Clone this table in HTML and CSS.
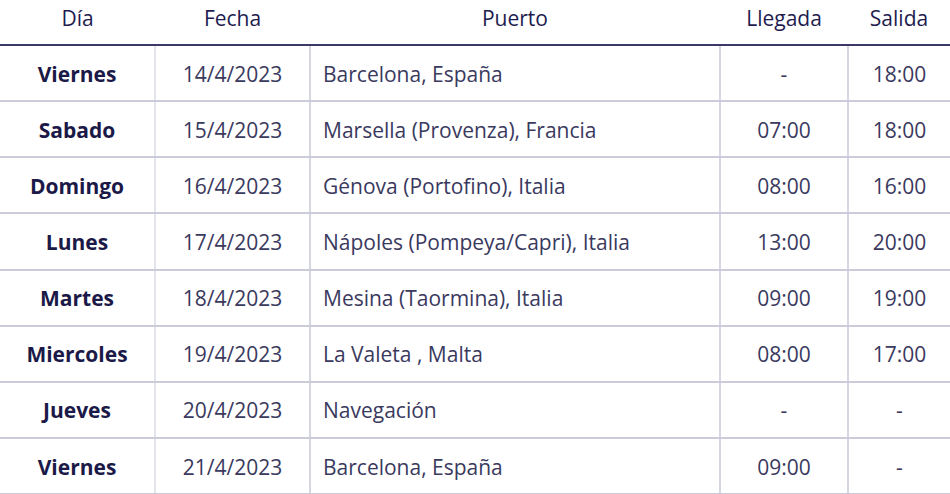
FILE: index.html
```html
<!DOCTYPE html>
<html lang="es">
<head>
<meta charset="utf-8">
<link rel="stylesheet" href="styles.css">
</head>
<body>
<table class="itinerary">
  <colgroup>
    <col class="c-dia"><col class="c-fecha"><col class="c-puerto"><col class="c-llegada"><col class="c-salida">
  </colgroup>
  <thead>
    <tr><th>Día</th><th>Fecha</th><th>Puerto</th><th>Llegada</th><th>Salida</th></tr>
  </thead>
  <tbody>
    <tr><td class="day">Viernes</td><td>14/4/2023</td><td class="port">Barcelona, España</td><td>-</td><td>18:00</td></tr>
    <tr><td class="day">Sabado</td><td>15/4/2023</td><td class="port">Marsella (Provenza), Francia</td><td>07:00</td><td>18:00</td></tr>
    <tr><td class="day">Domingo</td><td>16/4/2023</td><td class="port">Génova (Portofino), Italia</td><td>08:00</td><td>16:00</td></tr>
    <tr><td class="day">Lunes</td><td>17/4/2023</td><td class="port">Nápoles (Pompeya/Capri), Italia</td><td>13:00</td><td>20:00</td></tr>
    <tr><td class="day">Martes</td><td>18/4/2023</td><td class="port">Mesina (Taormina), Italia</td><td>09:00</td><td>19:00</td></tr>
    <tr><td class="day">Miercoles</td><td>19/4/2023</td><td class="port">La Valeta , Malta</td><td>08:00</td><td>17:00</td></tr>
    <tr><td class="day">Jueves</td><td>20/4/2023</td><td class="port">Navegación</td><td>-</td><td>-</td></tr>
    <tr><td class="day">Viernes</td><td>21/4/2023</td><td class="port">Barcelona, España</td><td>09:00</td><td>-</td></tr>
  </tbody>
</table>
</body>
</html>
```

FILE: styles.css
```css
html, body {
  margin: 0;
  padding: 0;
  background: #ffffff;
}
body {
  font-family: "Open Sans", "Noto Sans", sans-serif;
  color: #3a395e;
  overflow: hidden;
}
.itinerary {
  width: 950px;
  border-collapse: collapse;
  table-layout: fixed;
  font-size: 21px;
}
.c-dia { width: 155px; }
.c-fecha { width: 155px; }
.c-puerto { width: 410px; }
.c-llegada { width: 128px; }
.c-salida { width: 102px; }

.itinerary th {
  height: 36px;
  padding: 0 0 8px;
  font-weight: 500;
  color: #1e1c4f;
  text-align: center;
  border-bottom: 2px solid #3a3966;
}
.itinerary td {
  height: 53.15px;
  padding: 1px 0 0;
  text-align: center;
  border-bottom: 2px solid #cbcbda;
  border-left: 2px solid #d6d6e2;
}
.itinerary td:first-child { border-left: none; }
.itinerary td:nth-child(2) { border-left-color: #e4e4ec; }
.itinerary td.day {
  font-weight: 700;
  color: #1b1947;
}
.itinerary td.port {
  text-align: left;
  padding-left: 12px;
}
```
